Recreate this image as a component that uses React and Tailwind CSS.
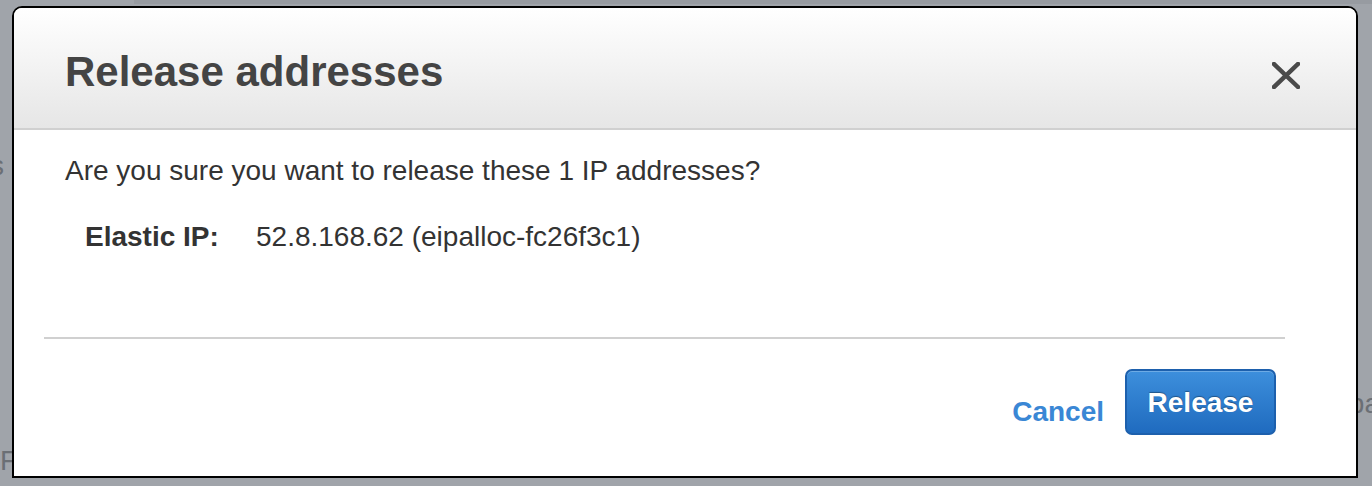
import React from "react"

const font = { fontFamily: '"Liberation Sans", Arial, Helvetica, sans-serif' }

function CloseIcon() {
  return (
    <svg width="28" height="27" viewBox="0 0 28 27" className="text-[#4a4a4a]">
      <path d="M2 2 L26 25 M26 2 L2 25" stroke="currentColor" strokeWidth="4.5" strokeLinecap="square" fill="none" />
    </svg>
  )
}

export default function App() {
  return (
    <div
      className="relative w-[1372px] h-[486px] overflow-hidden bg-[#a0a4aa] text-[#333]"
      style={font}
    >
      {/* page behind the overlay (only edges peek out) */}
      <div className="h-full flex flex-col text-[#6b6f75] text-[28px] leading-[32px]">
        <div className="h-[4px] ml-[134px] bg-[#979ba1]"></div>
        <div className="flex justify-between mt-[146px]">
          <span className="-ml-[10px]">s</span>
        </div>
        <div className="flex justify-end mt-[206px]">
          <span className="-mr-[8px]">ba</span>
        </div>
        <div className="mt-[25px]">F</div>
      </div>

      {/* Modal */}
      <div className="absolute left-[12px] top-[6px] w-[1346px] h-[472px] bg-white border-2 border-black rounded-t-[10px] overflow-hidden flex flex-col">
        {/* Header */}
        <div className="h-[122px] shrink-0 flex items-start justify-between pl-[51px] pr-[56px] pt-[43px] border-b-2 border-[#d0d0d0] bg-gradient-to-b from-white to-[#e6e6e6]">
          <h1 className="text-[42px] leading-none font-bold text-[#444]">Release addresses</h1>
          <button className="mt-[11px]">
            <CloseIcon />
          </button>
        </div>

        {/* Body */}
        <div className="pl-[51px] pt-[25px] text-[28px] leading-[32px]">
          <p>Are you sure you want to release these 1 IP addresses?</p>
          <div className="flex mt-[34px] pl-[20px]">
            <span className="font-bold w-[171px]">Elastic IP:</span>
            <span>52.8.168.62 (eipalloc-fc26f3c1)</span>
          </div>
        </div>

        <div className="mt-[84px] ml-[30px] mr-[71px] h-[2px] bg-[#d0d0d0]"></div>

        {/* Footer */}
        <div className="flex justify-end items-start pr-[80px] pt-[30px]">
          <button className="mt-[27px] text-[28px] leading-[32px] font-bold text-[#3a87d5]">Cancel</button>
          <button className="ml-[21px] h-[66px] w-[151px] pt-[2px] rounded-[7px] border-2 border-[#1d60ad] bg-gradient-to-b from-[#3d8fdc] to-[#1f6bbf] text-white text-[28px] leading-[32px] font-bold [text-shadow:0_-1px_1px_rgba(0,0,0,0.35)] shadow-[inset_0_1px_0_rgba(255,255,255,0.25)]">
            Release
          </button>
        </div>
      </div>
    </div>
  )
}
